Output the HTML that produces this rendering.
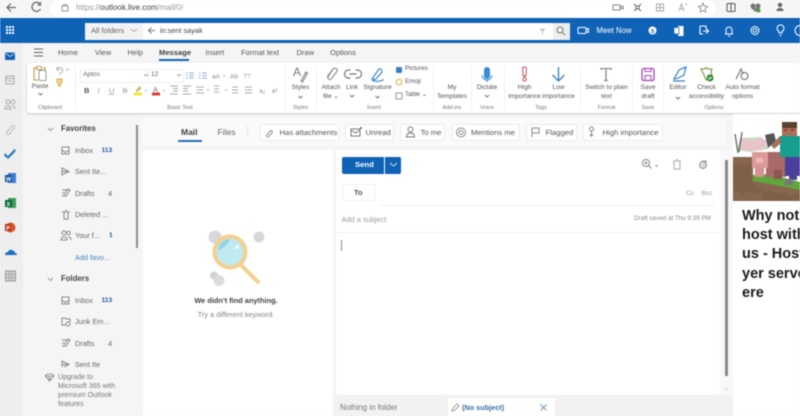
<!DOCTYPE html>
<html><head><meta charset="utf-8"><style>
html,body{margin:0;padding:0;width:800px;height:416px;overflow:hidden;background:#f5f5f5}
#r{position:relative;width:800px;height:416px;overflow:hidden;font-family:"Liberation Sans",sans-serif;color:#444;filter:blur(.4px)}
#r div,#r svg{position:absolute}
#r .chip span{position:absolute}
.t{white-space:nowrap;font-size:6.6px;line-height:8.7px;color:#555}
.c{text-align:center;transform:translateX(-50%)}
.g{font-size:5.6px;color:#777;line-height:8px;white-space:nowrap;transform:translateX(-50%)}
.tab{font-size:7.5px;color:#555;top:47.5px;line-height:10px;white-space:nowrap}
.sep{top:66px;width:1px;height:44px;background:#f0f0f0}
.n{font-size:7.3px;color:#666;white-space:nowrap;line-height:10px;left:75px}
.num{font-size:6.6px;white-space:nowrap;line-height:10px;color:#1a5a96;font-weight:bold}
.h{font-size:7.8px;font-weight:bold;color:#444;left:61px;line-height:10px}
.chip{top:124px;height:17px;background:#fff;border:1px solid #ececec;border-radius:2px;box-sizing:border-box}
.chip span{top:3px;font-size:7.7px;line-height:10px;color:#555;white-space:nowrap}
</style></head><body><div id="r">

<!-- browser bar -->
<div style="left:0;top:0;width:800px;height:18px;background:#f6f6f6"></div>
<div style="left:50px;top:0;width:666px;height:17px;background:#fff;border-radius:8px"></div>
<svg style="left:0;top:0" width="800" height="18">
<path d="M16 7.500H7.500M11 3.500L7 7.500L11 11.500" stroke="#666" fill="none" stroke-width="1.200"/>
<path d="M40 4A4.500 4.500 0 1 0 40.500 9M40.500 2V5H37.500" stroke="#666" fill="none" stroke-width="1.200"/>
<rect x="62" y="6" width="6" height="5" stroke="#999" fill="none"/><path d="M63.500 6V4.500H66.500V6" stroke="#999" fill="none"/>
<rect x="613" y="5" width="7" height="5" stroke="#888" fill="none"/><path d="M620 7l3-1v3l-3-1" stroke="#888" fill="none"/>
<path d="M634 4l2 2h3l2-2M634 11l2-2h3l2 2M636 6v3M639 6v3" stroke="#666" fill="none"/>
<rect x="656.500" y="4" width="7" height="7" stroke="#aaa" fill="none"/><path d="M660 4v7M656.500 7.500h7" stroke="#aaa" fill="none"/>
<path d="M679 11l2.500-7 2.500 7M680 9h3M685 4.500h2" stroke="#aaa" fill="none"/>
<path d="M703 3l1.300 3 3.200.5-2.300 2.200.6 3.300-2.800-1.600-2.800 1.600.6-3.300-2.300-2.200 3.200-.5z" stroke="#999" fill="none"/>
<rect x="727" y="3.500" width="8" height="8" rx="1" stroke="#555" fill="none"/><path d="M731 3.500v8" stroke="#555"/>
<circle cx="753" cy="6" r="2.500" fill="#777"/><circle cx="758" cy="6" r="2.500" fill="#777"/><path d="M751 8l4.500 4 4.500-4z" fill="#777"/><circle cx="758.500" cy="10.500" r="2" fill="#4a9a3d"/>
<circle cx="780" cy="5" r="2.200" fill="#666"/><path d="M776.500 11q0-3 3.500-3t3.500 3z" fill="#666"/>
</svg>
<div class="t" style="left:76px;top:2.500px;font-size:8px;line-height:10px;color:#999">https://<span style="color:#444">outlook.live.com</span>/mail/0/</div>

<!-- blue header -->
<div style="left:0;top:17.500px;width:800px;height:25.500px;background:#0f62b5"></div>
<div style="left:85px;top:22.500px;width:484.500px;height:17px;background:#fff;border-radius:1px"></div>
<div style="left:85px;top:22.500px;width:58px;height:17px;background:#f2f2f2"></div>
<div style="left:553px;top:22.500px;width:16.500px;height:17px;background:#eee"></div>
<div class="t" style="left:91px;top:26px;font-size:7.600px;line-height:10px;color:#666">All folders</div>
<div class="t" style="left:160px;top:26px;font-size:7.300px;line-height:10px;color:#444">in:sent sayak</div>
<svg style="left:0;top:18px" width="800" height="25">
<g fill="#fff"><rect x="6" y="8" width="2" height="2"/><rect x="9" y="8" width="2" height="2"/><rect x="12" y="8" width="2" height="2"/><rect x="6" y="11" width="2" height="2"/><rect x="9" y="11" width="2" height="2"/><rect x="12" y="11" width="2" height="2"/><rect x="6" y="14" width="2" height="2"/><rect x="9" y="14" width="2" height="2"/><rect x="12" y="14" width="2" height="2"/></g>
<path d="M131 11l3 2.500 3-2.500" stroke="#aaa" fill="none"/>
<path d="M155 12.500h-6M151.500 9.500l-3 3 3 3" stroke="#777" fill="none"/>
<path d="M539.500 10.500h6l-2.300 3v3h-1.400v-3z" fill="#ccc"/>
<circle cx="560" cy="12" r="3" stroke="#777" fill="none"/><path d="M562.500 14.500l2.500 2.500" stroke="#777"/>
<rect x="578" y="9.500" width="8" height="6" rx="1" stroke="#fff" fill="none"/><path d="M586 11.500l2.500-1v4l-2.500-1" stroke="#fff" fill="none"/>
<circle cx="652.500" cy="12.500" r="4" fill="#fff"/><text x="650.700" y="15" font-size="5.500" font-weight="bold" fill="#0f62b5" font-family="Liberation Sans">S</text>
<rect x="678" y="8" width="5.500" height="10" fill="#fff"/><rect x="674" y="9.500" width="5" height="6.500" fill="#fff" stroke="#0f62b5" stroke-width=".7"/>
<path d="M700 8h6v3M700 8v8h3M703 13h5M706 10.500l2.500 2.500-2.500 2.500" stroke="#fff" fill="none" stroke-width="1.100"/>
<path d="M725 16h8M726 16v-4a3 3 0 0 1 6 0v4M728 18h2" stroke="#fff" fill="none"/>
<circle cx="755" cy="12.500" r="4" stroke="#fff" fill="none"/><circle cx="755" cy="12.500" r="1.800" stroke="#fff" fill="none"/>
<path d="M779 15v-1.500a3.500 3.500 0 1 1 3 0V15zM779.500 17.500h2" stroke="#fff" fill="none"/>
<circle cx="800" cy="12.500" r="5" stroke="#fff" fill="none"/>
</svg>
<div class="t" style="left:596.500px;top:25.500px;font-size:7.800px;line-height:10px;color:#fff">Meet Now</div>

<!-- left rail -->
<div style="left:0;top:43px;width:23px;height:373px;background:#eeeeee"></div>
<div style="left:23px;top:43px;width:119px;height:373px;background:#f5f5f5"></div>
<!-- tabs -->
<svg style="left:34px;top:48px" width="12" height="9"><path d="M0 1h9M0 4.500h9M0 8h9" stroke="#666"/></svg>
<div class="tab" style="left:58px">Home</div>
<div class="tab" style="left:95px">View</div>
<div class="tab" style="left:127.500px">Help</div>
<div class="tab" style="left:159px;font-weight:bold;color:#444;font-size:7.600px">Message</div>
<div style="left:159px;top:59px;width:30px;height:1.500px;background:#0f62b5"></div>
<div class="tab" style="left:205.500px">Insert</div>
<div class="tab" style="left:241px">Format text</div>
<div class="tab" style="left:296.500px">Draw</div>
<div class="tab" style="left:330px">Options</div>

<!-- ribbon -->
<div style="left:27px;top:63px;width:773px;height:50px;background:#fff;border-radius:3px;box-shadow:0 1px 2px rgba(0,0,0,.2)"></div>
<div class="sep" style="left:75px"></div><div class="sep" style="left:285px"></div><div class="sep" style="left:316px"></div><div class="sep" style="left:433px"></div><div class="sep" style="left:471px"></div><div class="sep" style="left:504px"></div><div class="sep" style="left:580px"></div><div class="sep" style="left:632px"></div><div class="sep" style="left:663px"></div>

<div class="t c" style="left:40px;top:83px">Paste</div>
<div class="g" style="left:50px;top:103.500px">Clipboard</div>
<div style="left:80px;top:69px;width:67px;height:12px;border:1px solid #f0f0f0;background:#fff"></div>
<div style="left:148px;top:69px;width:34px;height:12px;border:1px solid #f0f0f0;background:#fff"></div>
<div class="t" style="left:83px;top:71px;color:#666">Aptos</div>
<div class="t" style="left:151px;top:71px;color:#666">12</div>
<div class="g" style="left:180px;top:103.500px">Basic Text</div>
<div class="t c" style="left:300.500px;top:84px">Styles</div>
<div class="g" style="left:300.500px;top:103.500px">Styles</div>
<div class="t c" style="left:331px;top:84px">Attach<br>file ⌄</div>
<div class="t c" style="left:352px;top:84px">Link</div>
<div class="t c" style="left:377.500px;top:84px">Signature</div>
<div class="t" style="left:405px;top:65px;font-size:6.300px">Pictures</div>
<div class="t" style="left:405px;top:78px;font-size:6.300px">Emoji</div>
<div class="t" style="left:405px;top:91px;font-size:6.300px">Table ⌄</div>
<div class="g" style="left:374px;top:103.500px">Insert</div>
<div class="t c" style="left:452px;top:84px">My<br>Templates</div>
<div class="g" style="left:452px;top:103.500px">Add-ins</div>
<div class="t c" style="left:487px;top:84px">Dictate</div>
<div class="g" style="left:487px;top:103.500px">Voice</div>
<div class="t c" style="left:524.500px;top:84px">High<br>importance</div>
<div class="t c" style="left:558.500px;top:84px">Low<br>importance</div>
<div class="g" style="left:541px;top:103.500px">Tags</div>
<div class="t c" style="left:606.500px;top:84px">Switch to plain<br>text</div>
<div class="g" style="left:606.500px;top:103.500px">Format</div>
<div class="t c" style="left:648px;top:84px">Save<br>draft</div>
<div class="g" style="left:648px;top:103.500px">Save</div>
<div class="t c" style="left:678px;top:84px">Editor</div>
<div class="t c" style="left:706.500px;top:84px">Check<br>accessibility</div>
<div class="t c" style="left:742.500px;top:84px">Auto format<br>options</div>
<div class="g" style="left:714px;top:103.500px">Options</div>

<svg style="left:0;top:60px" width="800" height="50">
<path d="M36 8h-2v12h4M43 8h2v2" stroke="#c8a24a" fill="none" stroke-width="1.200"/><rect x="39" y="10.500" width="7" height="10" rx="1" fill="#fff" stroke="#999"/><rect x="36.500" y="6.500" width="5" height="3" fill="#fff" stroke="#b9a060"/>
<path d="M38.500 33l2 2 2-2" stroke="#777" fill="none"/>
<path d="M57 9q3-3 5 0t-3 5M57 7v3h3" stroke="#aaa" fill="none"/><path d="M66.500 9l1 1 1-1" stroke="#aaa" fill="none"/>
<path d="M57 19h5v3l-1.500 2v2h-2v-2L57 22z" stroke="#d1ad50" fill="#f1d98e"/>
<path d="M144 14l2 2 2-2M177 14l2 2 2-2" stroke="#aaa" fill="none"/>
<g stroke="#8fb0d0" fill="none"><path d="M189 13h5M189 15.500h5M189 18h5M186 13h1.500M186 15.500h1.500M186 18h1.500M202 13h5M202 15.500h5M202 18h5M199 13h1.500M199 15.500h1.500M199 18h1.500"/></g>
<text x="212" y="18.500" font-size="6.500" fill="#888" font-family="Liberation Sans">aA</text><path d="M223 16h2" stroke="#aaa"/><text x="230" y="18.500" font-size="6.500" fill="#888" font-family="Liberation Sans">Ab</text><text x="243" y="18.500" font-size="7" fill="#aaa" font-family="Liberation Sans">??</text>
<text x="84" y="33" font-size="7.500" font-weight="bold" fill="#555" font-family="Liberation Sans">B</text>
<text x="97.500" y="33" font-size="7.500" font-style="italic" fill="#999" font-family="Liberation Sans">I</text>
<text x="109" y="33" font-size="7.500" text-decoration="underline" fill="#999" font-family="Liberation Sans">U</text>
<text x="122.500" y="33" font-size="7.500" text-decoration="line-through" fill="#999" font-family="Liberation Sans">S</text>
<rect x="134" y="32.500" width="8" height="3" fill="#f5e33a"/><path d="M135.500 31l4-5 2 2-4 4z" fill="#c9b56a"/><path d="M145 30.500h2" stroke="#aaa"/>
<rect x="152" y="32.500" width="8" height="3" fill="#d83b3b"/><text x="153" y="32" font-size="7.500" fill="#777" font-family="Liberation Sans">A</text><path d="M163 30.500h2" stroke="#aaa"/>
<g stroke="#aaa" fill="none"><path d="M170 26h8M173 28.500h5M173 31h5M170 34h8M183 26h8M183 28.500h5M183 31h5M183 34h8M196 27h8M197 30h6M196 33h8M207 30h2M214 26h5M214 29h5M214 32h5M225 30h2M232 27h6M232 30h6M232 33h6M245 27h7M245 30h7M245 33h7"/></g>
<text x="259.500" y="33" font-size="6.500" fill="#777" font-family="Liberation Sans">x₂</text><text x="272" y="33" font-size="6.500" fill="#777" font-family="Liberation Sans">x²</text>
<text x="293" y="16" font-size="12" fill="#777" font-family="Liberation Sans">A</text><path d="M301 21l5-9 1.500 1-5 9z" stroke="#777" fill="none"/>
<path d="M298.500 36l2 2 2-2" stroke="#777" fill="none"/>
<path d="M327 17l6-8q2-2 3.500 0t0 3l-5.500 7q-1.500 1.500-2.500 0t0-3l4-6" stroke="#888" fill="none" stroke-width="1.100"/>
<path d="M350.500 10h-2a4 4 0 0 0 0 8h2M355.500 10h2a4 4 0 0 1 0 8h-2M349.500 14h7" stroke="#777" fill="none" stroke-width="1.200"/>
<path d="M372 19l7-10q3-1 3 3l-6 7q-3 1-4 0zM372 20.500q7 2 12-1" stroke="#3f88c5" fill="none" stroke-width="1.200"/>
<path d="M375.500 36l2 2 2-2M350 35l2 2 2-2" stroke="#777" fill="none"/>
<rect x="396" y="7" width="6" height="6" rx="1" fill="#3a7fc4"/><circle cx="399" cy="22" r="2.800" fill="#fff" stroke="#d6b13e"/><rect x="396" y="33" width="6" height="6" stroke="#999" fill="none"/>
<rect x="484" y="7" width="6" height="12" rx="3" fill="#3a8ad6"/><path d="M482 15a5 5 0 0 0 10 0M487 20v2" stroke="#3a8ad6" fill="none"/>
<path d="M485 35l2 2 2-2M676 37l2 2 2-2" stroke="#777" fill="none"/>
<path d="M522.500 8q2-2 4 0l-.6 8h-2.800zM524.500 16v1" stroke="#b5505a" fill="none"/><circle cx="524.500" cy="19.500" r="1.700" stroke="#b5505a" fill="none"/>
<path d="M558.500 7v14M552.500 15l6 6 6-6" stroke="#3a80c0" fill="none" stroke-width="1.300"/>
<path d="M601 10V8.500h10V10M606 8.500v12M604 20.500h4" stroke="#777" fill="none" stroke-width="1.100"/>
<rect x="642" y="8.500" width="12" height="12" rx="1.500" stroke="#a44bb0" fill="none" stroke-width="1.300"/><path d="M645 8.500v3h6v-3M645 20.500v-5h6v5" stroke="#a44bb0" fill="none"/>
<path d="M674 19l5-9q4-2 7-3l-2 8q-5 3-9 4zM673 21h12" stroke="#3a80c0" fill="none" stroke-width="1.200"/>
<path d="M701 9h4l1-1.500L708 9h4l-1 3 1 3h-3v5h-3l-2-5z" stroke="#6a8f3a" fill="none"/><circle cx="710" cy="18" r="3.500" fill="#3c8a3c"/><path d="M708.500 18l1 1 2-2" stroke="#fff" fill="none"/>
<path d="M736 19l5-10 2 5" stroke="#666" fill="none"/><circle cx="744.500" cy="16" r="3.500" stroke="#666" fill="none"/>
</svg>

<!-- rail icons -->
<svg style="left:0;top:43px" width="23" height="250">
<rect x="5" y="9.500" width="10" height="7.500" rx="1" fill="#0f62b5"/><path d="M5.500 10.500l4.500 3 4.500-3" stroke="#fff" fill="none" stroke-width=".7"/>
<rect x="6" y="33" width="8" height="8" stroke="#aaa" fill="none"/><path d="M6 35.500h8M8 38h4" stroke="#aaa" fill="none"/>
<circle cx="8" cy="59" r="2" stroke="#aaa" fill="none"/><circle cx="13" cy="59" r="2" stroke="#aaa" fill="none"/><path d="M5 66q0-3 3-3t3 3zM12 63q3 0 3 3" stroke="#aaa" fill="none"/>
<path d="M7 89l5-6q2-1 2.500.5t-1 2.500l-4 5q-2 1-2.500-.5z" stroke="#bbb" fill="none"/>
<path d="M5 110l3 3 7-7.500.500 3-7.500 7.500-4-3.500z" fill="#2a7bc4"/>
<rect x="8" y="130" width="8" height="10" fill="#3b7ed2"/><rect x="5" y="132" width="7" height="7" fill="#1a4f9a"/><text x="6" y="137.800" font-size="5.500" font-weight="bold" fill="#fff" font-family="Liberation Sans">W</text>
<rect x="8" y="155" width="8" height="10" fill="#3d9a5c"/><rect x="5" y="157" width="7" height="7" fill="#106a37"/><text x="6.500" y="162.800" font-size="5.500" font-weight="bold" fill="#fff" font-family="Liberation Sans">X</text>
<circle cx="10.500" cy="184.500" r="5" fill="#d9512c"/><rect x="5" y="181" width="6" height="7" fill="#b53a1c"/><text x="6.200" y="187" font-size="5.500" font-weight="bold" fill="#fff" font-family="Liberation Sans">P</text>
<path d="M5 212q0-3 3-3 1-3 4-2t3 3q2 0 2 2z" fill="#1a6fc4"/>
<rect x="5.500" y="228" width="10" height="10" fill="#d5d5d5" stroke="#999"/><path d="M9 228v10M12 228v10M5.500 231.500h10M5.500 234.500h10" stroke="#aaa"/>
</svg>

<!-- folder pane -->
<div style="left:135.500px;top:125px;width:2.500px;height:123px;background:#8c8c8c"></div>
<div class="h" style="top:124px">Favorites</div>
<div class="n" style="top:146px">Inbox</div><div class="num" style="left:101.500px;top:146px">113</div>
<div class="n" style="top:167px">Sent Ite...</div>
<div class="n" style="top:189px">Drafts</div><div class="n" style="left:108px;top:189px">4</div>
<div class="n" style="top:210px">Deleted ...</div>
<div class="n" style="top:231px">Your f...</div><div class="num" style="left:109px;top:231px">1</div>
<div class="n" style="top:253px;color:#4b86bd">Add favo...</div>
<div class="h" style="top:274px">Folders</div>
<div class="n" style="top:296px">Inbox</div><div class="num" style="left:101.500px;top:296px">113</div>
<div class="n" style="top:317px">Junk Em...</div>
<div class="n" style="top:339px">Drafts</div><div class="n" style="left:108px;top:339px">4</div>
<svg style="left:40px;top:120px" width="100" height="247">
<path d="M8 8l2.500 2.500L13 8M8 158l2.500 2.500L13 158" stroke="#999" fill="none"/>
<path d="M22 27h7v7h-7zM22 31h2l1 1.500h1l1-1.500h2" stroke="#888" fill="none"/>
<path d="M22 177h7v7h-7zM22 181h2l1 1.500h1l1-1.500h2" stroke="#888" fill="none"/>
<path d="M22 48l7 3.500-7 3.500zM22 51.500h7" stroke="#888" fill="none"/>
<path d="M22 76h4l4-6-2-1-4 6M22 70h5M22 73h2" stroke="#888" fill="none"/>
<path d="M22 226h4l4-6-2-1-4 6M22 220h5M22 223h2" stroke="#888" fill="none"/>
<path d="M22 92h8M24 92v7h4v-7M25 90.500h2" stroke="#888" fill="none"/>
<circle cx="24" cy="113" r="2" stroke="#888" fill="none"/><circle cx="28.500" cy="113" r="1.800" stroke="#888" fill="none"/><path d="M21 120q0-3 3-3t3 3zM28 117q3 0 3 3" stroke="#888" fill="none"/>
<path d="M22 198h3l1 1h4v3M22 198v7h4" stroke="#888" fill="none"/><circle cx="28" cy="204" r="2" stroke="#888" fill="none"/>
<path d="M22 241l7 3.500-7 3.500zM22 244.500h7" stroke="#888" fill="none"/>
</svg>
<div style="left:70px;top:357px;width:60px;height:10px;overflow:hidden"><div class="n" style="left:5px;top:3px">Sent Ite</div></div>
<svg style="left:45px;top:373px" width="12" height="10"><path d="M2 1h5l2 2-4.500 5L0 3zM0 3h9M3 3l1.500 5L6 3" stroke="#888" fill="none" stroke-width=".8"/></svg>
<div class="t" style="left:58px;top:373px;line-height:9px;color:#777;font-size:7.100px">Upgrade to<br>Microsoft 365 with<br>premium Outlook<br>features</div>

<!-- filter bar -->
<div style="left:143px;top:118px;width:582px;height:27px;background:#fafafa"></div>
<div class="t" style="left:181px;top:127px;font-size:8.500px;line-height:10px;font-weight:bold;color:#444">Mail</div>
<div style="left:178px;top:140px;width:24px;height:1.500px;background:#2a6db0"></div>
<div class="t" style="left:217.500px;top:127px;font-size:8.500px;line-height:10px;color:#666">Files</div>
<div style="left:247px;top:126px;width:1px;height:11px;background:#e2e2e2"></div>
<div class="chip" style="left:259.500px;width:79px"><span style="left:19px">Has attachments</span></div>
<div class="chip" style="left:345px;width:49px"><span style="left:19.500px">Unread</span></div>
<div class="chip" style="left:400px;width:44.500px"><span style="left:19.500px">To me</span></div>
<div class="chip" style="left:451.500px;width:68px"><span style="left:18.500px">Mentions me</span></div>
<div class="chip" style="left:525.500px;width:51px"><span style="left:19px">Flagged</span></div>
<div class="chip" style="left:583px;width:80px"><span style="left:18.500px">High importance</span></div>
<svg style="left:260px;top:124px" width="410" height="17">
<path d="M6 12l4-5q1.500-1 2 0t0 2l-4 4q-1 .5-1.500 0" stroke="#888" fill="none"/>
<rect x="91" y="5" width="9" height="7" stroke="#777" fill="none"/><path d="M91 6l4.500 3L100 6" stroke="#777" fill="none"/><circle cx="101" cy="4" r="1" fill="#666"/>
<circle cx="150.500" cy="5.500" r="2.500" stroke="#777" fill="none"/><path d="M146.500 13q0-4 4-4t4 4z" stroke="#777" fill="none"/>
<circle cx="201" cy="8.500" r="4.500" stroke="#888" fill="none"/><circle cx="201" cy="8.500" r="2" stroke="#888" fill="none"/>
<path d="M272 13V4h7v5h-7" stroke="#888" fill="none"/>
<path d="M331.500 7v6M329.500 11h4" stroke="#888" fill="none"/><circle cx="331.500" cy="5" r="2" stroke="#888" fill="none"/>
</svg>

<!-- list pane -->
<div style="left:143px;top:150px;width:190px;height:266px;background:#fff"></div>
<svg style="left:205px;top:225px" width="65" height="65">
<circle cx="10" cy="12" r="6.500" fill="#d8d8d8"/><circle cx="54" cy="12" r="5.500" fill="#d8d8d8"/><circle cx="9" cy="50.500" r="4" fill="#d4d4d4"/><circle cx="14" cy="55.500" r="5.500" fill="#dcdcdc"/>
<path d="M36 40l17 17" stroke="#f5cf8f" stroke-width="4" stroke-linecap="round"/>
<circle cx="25" cy="27" r="15.500" fill="#bfeaf0" stroke="#f5cf8f" stroke-width="4"/>
<path d="M13 26a12 12 0 0 1 12-12q-2 6-12 12z" fill="#8fd4e2"/><circle cx="32" cy="22" r="2" fill="#eafafc"/>
</svg>
<div class="t c" style="left:236px;top:296px;font-size:7.400px;line-height:10px;font-weight:bold;color:#444">We didn't find anything.</div>
<div class="t c" style="left:236px;top:310px;font-size:7.400px;line-height:10px;color:#888">Try a different keyword.</div>

<!-- reading pane -->
<div style="left:335.500px;top:150px;width:385px;height:245px;background:#fff"></div>
<div style="left:720px;top:150px;width:13px;height:245px;background:#f8f8f8"></div>
<div style="left:333px;top:395px;width:400px;height:21px;background:#f2f2f2"></div>
<div style="left:342px;top:156.500px;width:42px;height:17px;background:#0f62b5;border-radius:2px 0 0 2px"></div>
<div style="left:385px;top:156.500px;width:16px;height:17px;background:#0f62b5;border-radius:0 2px 2px 0"></div>
<div class="t" style="left:355px;top:160px;font-size:7.700px;line-height:10px;color:#fff;font-weight:bold">Send</div>
<svg style="left:389px;top:162px" width="9" height="6"><path d="M1 1l3.500 3L8 1" stroke="#cfe0f2" fill="none"/></svg>
<svg style="left:640px;top:157px" width="75" height="16">
<circle cx="6" cy="6" r="3.500" stroke="#888" fill="none"/><path d="M8.500 8.500l3 3M4.500 6h3M6 4.500v3" stroke="#888" fill="none"/><path d="M15 8l1.500 1.500L18 8" stroke="#aaa" fill="none"/>
<path d="M33 4h8M34 4v8h6V4M36 2.500h2" stroke="#aaa" fill="none"/>
<circle cx="63" cy="8" r="3.500" stroke="#999" fill="#ddd"/><path d="M62 4h4v4" stroke="#999" fill="none"/>
</svg>
<div style="left:341.500px;top:184px;width:33px;height:17px;background:#fff;border:1px solid #f0f0f0;box-sizing:border-box"></div>
<div class="t" style="left:354px;top:188px;font-size:7.500px;line-height:10px;font-weight:bold;color:#555">To</div>
<div class="t" style="left:686px;top:189px;font-size:6.500px;line-height:10px;color:#999">Cc</div>
<div class="t" style="left:701.500px;top:189px;font-size:6.500px;line-height:10px;color:#999">Bcc</div>
<div style="left:380px;top:205px;width:335px;height:1px;background:#eee"></div>
<div class="t" style="left:341.500px;top:215px;font-size:7.400px;line-height:10px;color:#999">Add a subject</div>
<div class="t" style="left:634px;top:214px;font-size:6.300px;line-height:10px;color:#888">Draft saved at Thu 9:39 PM</div>
<div style="left:335px;top:232px;width:385px;height:1px;background:#f0f0f0"></div>
<div style="left:341px;top:240px;width:1px;height:11px;background:#888"></div>
<div style="left:724.500px;top:160px;width:3.500px;height:216px;background:#8a8a8a"></div>
<div style="left:725.500px;top:388.500px;width:1.500px;height:1.500px;background:#888"></div>

<!-- bottom tabs -->
<div class="t" style="left:340px;top:403px;font-size:7.900px;line-height:10px;color:#777">Nothing in folder</div>
<div style="left:448px;top:398px;width:107px;height:18px;background:#fff"></div>
<svg style="left:451px;top:403px" width="9" height="9"><path d="M1 8l1-3 4-4 2 2-4 4z" stroke="#888" fill="none" stroke-width=".8"/></svg>
<div class="t" style="left:462px;top:403px;font-size:7.300px;line-height:10px;color:#3a6ea5;font-weight:bold">(No subject)</div>
<svg style="left:538.500px;top:403px" width="9" height="9"><path d="M1.500 1.500l6 6M7.500 1.500l-6 6" stroke="#6a9ac8"/></svg>

<!-- ad -->
<div style="left:733px;top:114px;width:67px;height:302px;background:#fff"></div>
<svg style="left:733px;top:120px" width="67" height="81" viewBox="0 0 67 81">
<rect width="67" height="81" fill="#fff"/>
<path d="M0 37h20v18l47 7v19H0z" fill="#86664e"/>
<path d="M20 55l16-1 31 8v8l-47-9z" fill="#5fa63c"/>
<path d="M0 42l5 3 4-2 4 3 5-3 2 5-3 6 3 9 4 3 8 5-10 3-6-3-6 4-4-4-5 2zM30 72l8-2 6 4 7-2 6 4 10-3v8H30z" fill="#7b5a44" opacity=".6"/>
<path d="M4 30l3-12 22-1 7 12-20 3z" fill="#9fb184" opacity=".5"/>
<path d="M8 18l12 3 9-3 6 4-8 8h-17z" fill="#e9c3ca"/>
<path d="M2 14l3 19M9 12l-3 20" stroke="#666" stroke-width="1.300" fill="none"/>
<path d="M32 15l9-2 2 8-8 7z" fill="#555"/>
<rect x="33" y="32" width="20" height="25" fill="#a96967"/>
<rect x="19" y="32" width="16" height="16" fill="#dc9b9b"/>
<rect x="22" y="47" width="9" height="10" fill="#d69291"/><rect x="41" y="50" width="8" height="9" fill="#8f5553"/>
<rect x="23" y="38" width="7" height="5" fill="#efb7b7"/>
<rect x="49" y="2" width="15" height="13" fill="#5b4030"/><rect x="49" y="8" width="15" height="8" fill="#a67257"/>
<rect x="51" y="9" width="3" height="2" fill="#a33"/><rect x="58" y="9" width="3" height="2" fill="#a33"/>
<path d="M47 16h20v21H47z" fill="#179e8e"/>
<path d="M47 16l-9 9 3 4 7-6z" fill="#a67257"/>
<path d="M52 37h15v19h-3v4h-8v-4h-4z" fill="#4a3f9a"/>
<rect x="52" y="59" width="8" height="6" fill="#777"/>
</svg>
<div style="left:742px;top:207px;width:60px;font-size:14.500px;line-height:19.200px;font-weight:bold;color:#1a1a1a;white-space:nowrap">Why not<br>host with<br>us - Host<br>yer serve<br>ere</div>
</div></body></html>
